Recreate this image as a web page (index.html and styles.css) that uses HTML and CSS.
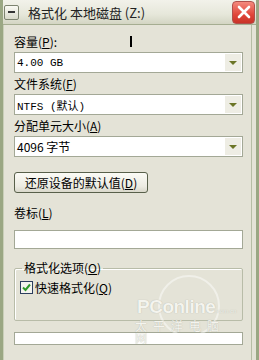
FILE: index.html
```html
<!DOCTYPE html>
<html lang="zh-CN">
<head>
    <meta charset="UTF-8">
    <title>格式化 本地磁盘 (Z:)</title>
    <link rel="stylesheet" href="styles.css">
</head>
<body>
    <div class="window">
        <div class="titlebar">
            <span class="sys-icon"><span></span></span>
            <span class="title">格式化 本地磁盘 (Z:)</span>
            <span class="close">
                <svg width="14" height="14" viewBox="0 0 14 14"><path d="M2 2 L12 12 M12 2 L2 12" stroke="#fff" stroke-width="2.6" stroke-linecap="round"/></svg>
            </span>
        </div>
        <div class="content">
            <div class="label">容量(<u>P</u>): <span class="caret"></span></div>
            <div class="combo"><span class="value mono">4.00 GB</span><span class="arrow"></span></div>

            <div class="label">文件系统(<u>F</u>)</div>
            <div class="combo"><span class="value mono">NTFS (默认)</span><span class="arrow"></span></div>

            <div class="label">分配单元大小(<u>A</u>)</div>
            <div class="combo"><span class="value">4096 字节</span><span class="arrow"></span></div>

            <button class="btn">还原设备的默认值(<u>D</u>)</button>

            <div class="label">卷标(<u>L</u>)</div>
            <div class="textbox"></div>

            <fieldset class="group">
                <legend>格式化选项(<u>O</u>)</legend>
                <div class="check-row">
                    <span class="checkbox">
                        <svg width="11" height="11" viewBox="0 0 11 11"><path d="M2 5.5 L4.5 8 L9 2.5" fill="none" stroke="#2f9a2a" stroke-width="2"/></svg>
                    </span>
                    <span>快速格式化(<u>Q</u>)</span>
                </div>
            </fieldset>

            <div class="progress"></div>

            <div class="watermark">
                <span class="wm-ring"></span>
                <span class="wm-logo">PConline<small>.com.cn</small></span>
                <span class="wm-sub">太平洋电脑网</span>
            </div>
        </div>
    </div>
</body>
</html>
```

FILE: styles.css
```css
body {
    margin: 0;
    background: #e4e3d7;
    font-family: "Noto Sans CJK SC", "DejaVu Sans", sans-serif;
    font-size: 12px;
    color: #000;
}
.window {
    width: 259px;
    height: 360px;
    box-sizing: border-box;
    background: #e4e3d7;
    border-left: 3px solid #9aa783;
    border-right: 3px solid #9aa783;
    box-shadow: inset 1px 0 0 #c9cfb8, inset -4px 0 0 #e4e3d7, inset -5px 0 0 #b6bda5;
    overflow: hidden;
}
.titlebar {
    height: 24px;
    margin: 0 -3px;
    display: flex;
    align-items: center;
    background: linear-gradient(#f2f2ea, #e6e7da 60%, #d3d5c3);
    border-bottom: 1px solid #a5ad91;
    padding-left: 4px;
}
.sys-icon {
    width: 13px;
    height: 13px;
    border: 1px solid #7d8470;
    border-radius: 2px;
    background: linear-gradient(#fafaf4, #d8d9ca);
    display: flex;
    align-items: center;
    justify-content: center;
}
.sys-icon span {
    width: 7px;
    height: 2px;
    background: #333;
}
.title {
    margin-left: 9px;
    font-size: 13px;
    color: #222;
    flex: 1;
}
.close {
    width: 21px;
    height: 21px;
    margin-right: 4px;
    border-radius: 4px;
    border: 1px solid #b0504c;
    background: linear-gradient(#f48a7e, #e0463a 60%, #c93328);
    display: flex;
    align-items: center;
    justify-content: center;
}
.content {
    padding: 10px 13px 0 11px;
    position: relative;
}
.label {
    height: 14px;
    line-height: 14px;
    position: relative;
}
.caret {
    position: absolute;
    left: 116px;
    top: 1px;
    width: 2px;
    height: 11px;
    background: #000;
}
.combo {
    height: 19px;
    margin: 3px 0 4px;
    background: #fff;
    border: 1px solid #a3a896;
    display: flex;
    align-items: center;
}
.value {
    flex: 1;
    padding-left: 2px;
}
.mono {
    font-family: "Liberation Mono", "Noto Sans CJK SC", monospace;
    font-size: 11px;
}
.arrow {
    width: 16px;
    height: 17px;
    margin-right: 1px;
    background: #eeede4;
    position: relative;
}
.arrow::after {
    content: "";
    position: absolute;
    left: 4px;
    top: 7px;
    border-left: 4px solid transparent;
    border-right: 4px solid transparent;
    border-top: 4px solid #6b7526;
}
.btn {
    display: block;
    margin: 15px 0 13px;
    height: 21px;
    width: 134px;
    padding: 0;
    font: inherit;
    font-size: 12px;
    background: linear-gradient(#fbfbf6, #ecebe2 70%, #d9d8cb);
    border: 1px solid #58604a;
    border-radius: 3px;
}
.textbox {
    height: 17px;
    margin-top: 10px;
    background: #fff;
    border: 1px solid #a3a896;
}
.group {
    margin: 12px 0 0;
    padding: 4px 5px 0;
    height: 54px;
    border: 1px solid #b8bca8;
    border-radius: 2px;
    box-shadow: inset 1px 1px 0 #fff;
}
.group legend {
    padding: 0 2px;
    margin-left: 2px;
    line-height: 14px;
}
.check-row {
    display: flex;
    align-items: center;
    gap: 2px;
}
.checkbox {
    width: 11px;
    height: 11px;
    border: 1px solid #2c3e5e;
    background: #f4f4ee;
    display: flex;
}
.progress {
    height: 11px;
    margin-top: 11px;
    background: #fff;
    border: 1px solid #a3a896;
}
.watermark {
    position: absolute;
    left: 127px;
    top: 247px;
    width: 112px;
    height: 66px;
    color: #f4f4ee;
    line-height: 1;
    pointer-events: none;
}
.wm-ring {
    position: absolute;
    left: 28px;
    top: 3px;
    width: 58px;
    height: 58px;
    border: 2px solid rgba(255, 255, 255, 0.45);
    border-radius: 50%;
}
.wm-logo {
    position: absolute;
    left: 7px;
    top: 25px;
    font-family: "Liberation Sans", sans-serif;
    font-weight: bold;
    font-size: 19px;
    letter-spacing: -0.5px;
    text-shadow: 0 0 1px #a9a99f;
}
.wm-logo small {
    font-size: 6px;
    font-weight: normal;
    letter-spacing: 0;
}
.wm-sub {
    position: absolute;
    left: 5px;
    top: 48px;
    font-size: 12px;
    letter-spacing: 6px;
    text-shadow: 0 0 1px #a9a99f;
}
```
